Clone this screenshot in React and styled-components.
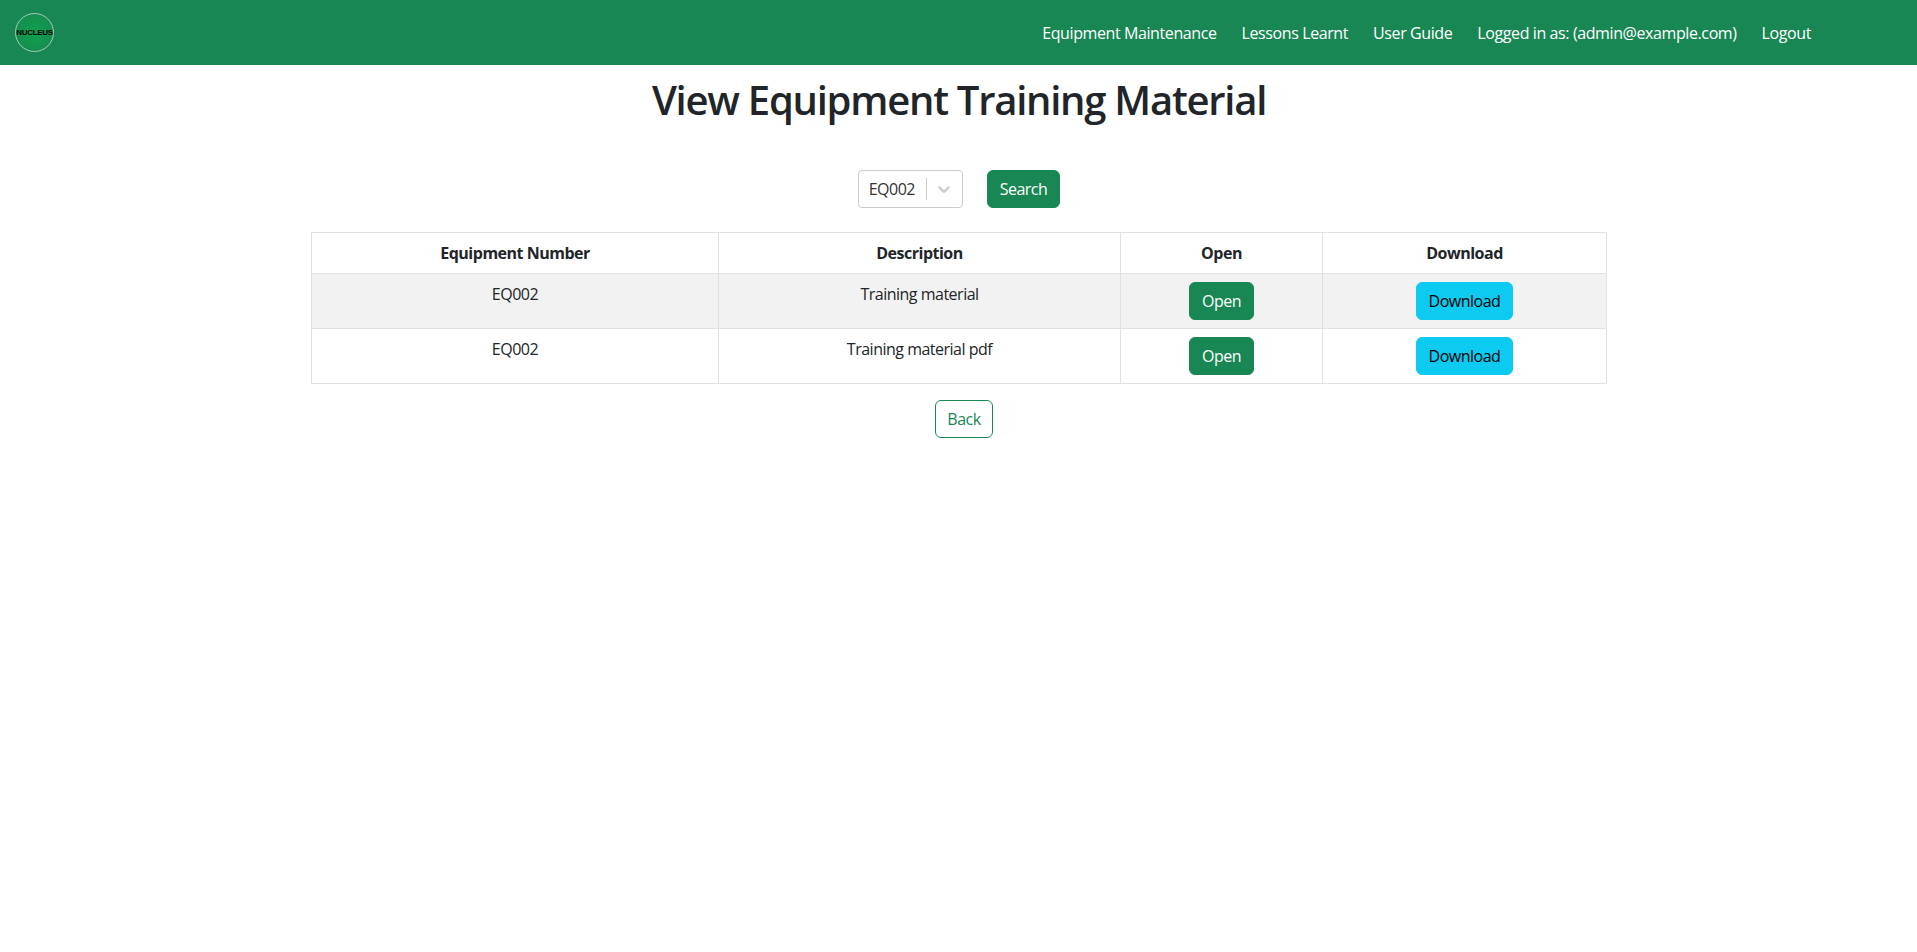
import React from "react";
import styled, { createGlobalStyle } from "styled-components";

const GlobalStyle = createGlobalStyle`
  * {
    box-sizing: border-box;
  }

  body {
    margin: 0;
    background: #fff;
    color: #212529;
    font-family: "Open Sans", "Noto Sans", "Liberation Sans", sans-serif;
    font-size: 16px;
    line-height: 1.5;
    letter-spacing: -0.5px;
  }
`;

const NAV_LINKS = [
  "Equipment Maintenance",
  "Lessons Learnt",
  "User Guide",
  "Logged in as: (admin@example.com)",
  "Logout",
];

const COLUMNS = [
  { title: "Equipment Number", width: 407 },
  { title: "Description", width: 402 },
  { title: "Open", width: 202 },
  { title: "Download", width: 284 },
];

const ROWS = [
  { id: 1, number: "EQ002", description: "Training material" },
  { id: 2, number: "EQ002", description: "Training material pdf" },
];

const App = () => {
  return (
    <>
      <GlobalStyle />
      <Navbar>
        <Logo>
          <LogoText>NUCLEUS</LogoText>
        </Logo>
        <NavLinks>
          {NAV_LINKS.map((link) => (
            <NavLink key={link}>{link}</NavLink>
          ))}
        </NavLinks>
      </Navbar>
      <Main>
        <Title>View Equipment Training Material</Title>
        <SearchRow>
          <Select>
            <SelectValue>EQ002</SelectValue>
            <Separator />
            <Chevron viewBox="0 0 20 20" aria-hidden="true">
              <path d="M4.516 7.548c0.436-0.446 1.043-0.481 1.576 0l3.908 3.747 3.908-3.747c0.533-0.481 1.141-0.446 1.576 0 0.436 0.445 0.408 1.197 0 1.615-0.406 0.418-4.695 4.502-4.695 4.502-0.217 0.223-0.502 0.335-0.787 0.335s-0.57-0.112-0.789-0.335c0 0-4.287-4.084-4.695-4.502s-0.436-1.17 0-1.615z" />
            </Chevron>
          </Select>
          <Button $variant="success">Search</Button>
        </SearchRow>
        <Table>
          <colgroup>
            {COLUMNS.map((col) => (
              <col key={col.title} width={col.width} />
            ))}
          </colgroup>
          <thead>
            <tr>
              {COLUMNS.map((col) => (
                <HeadCell key={col.title}>{col.title}</HeadCell>
              ))}
            </tr>
          </thead>
          <tbody>
            {ROWS.map((row, i) => (
              <Row key={row.id} $striped={i % 2 === 0}>
                <Cell>{row.number}</Cell>
                <Cell>{row.description}</Cell>
                <Cell>
                  <Button $variant="success">Open</Button>
                </Cell>
                <Cell>
                  <Button $variant="info">Download</Button>
                </Cell>
              </Row>
            ))}
          </tbody>
        </Table>
        <BackRow>
          <Button $variant="outline">Back</Button>
        </BackRow>
      </Main>
    </>
  );
};

const Navbar = styled.nav`
  height: 65px;
  background: #198754;
  display: flex;
  align-items: center;
  justify-content: space-between;
  padding: 0 93.5px 0 15px;
`;

const Logo = styled.div`
  width: 39px;
  height: 39px;
  border: 1px solid #9fcdb4;
  border-radius: 50%;
  background: radial-gradient(circle, #0fa34f 0%, #14924f 55%, #198754 100%);
  display: flex;
  align-items: center;
  justify-content: center;
  overflow: hidden;
`;

const LogoText = styled.span`
  color: #000;
  font-family: "Liberation Sans", sans-serif;
  font-size: 8px;
  font-weight: 700;
  letter-spacing: -0.3px;
  line-height: 1;
`;

const NavLinks = styled.div`
  display: flex;
  align-items: center;
`;

const NavLink = styled.a`
  color: #fff;
  padding: 8px;
  margin: 0 4.5px;
  letter-spacing: -0.4px;
  white-space: nowrap;
`;

const Main = styled.main`
  display: flex;
  flex-direction: column;
  align-items: center;
  padding-left: 1px;
`;

const Title = styled.h1`
  margin: 11px 0 0;
  font-size: 40px;
  font-weight: 600;
  letter-spacing: -1.25px;
  line-height: 48px;
`;

const SearchRow = styled.div`
  display: flex;
  gap: 24px;
  margin-top: 46px;
`;

const Select = styled.div`
  width: 105px;
  height: 38px;
  border: 1px solid #ccc;
  border-radius: 4px;
  display: flex;
  align-items: center;
  padding-left: 10px;
`;

const SelectValue = styled.span`
  color: #333;
  width: 57px;
`;

const Separator = styled.span`
  width: 1px;
  height: 22px;
  background: #ccc;
`;

const Chevron = styled.svg`
  width: 20px;
  height: 20px;
  margin-left: 7px;
  fill: #ccc;
`;

const variants = {
  success: "background: #198754; border-color: #198754; color: #fff;",
  info: "background: #0dcaf0; border-color: #0dcaf0; color: #000;",
  outline: "background: #fff; border-color: #198754; color: #198754; padding: 6px 11px;",
};

const Button = styled.button`
  height: 38px;
  padding: 6px 12px;
  border: 1px solid;
  border-radius: 6px;
  font-family: inherit;
  font-size: 16px;
  letter-spacing: inherit;
  line-height: 24px;
  ${(props) => variants[props.$variant]}
`;

const Table = styled.table`
  width: 1295px;
  margin-top: 24px;
  border-collapse: collapse;
  table-layout: fixed;
`;

const HeadCell = styled.th`
  padding: 8px;
  border: 1px solid #dee2e6;
  font-weight: 700;
  text-align: center;
`;

const Row = styled.tr`
  background: ${(props) => (props.$striped ? "#f2f2f2" : "#fff")};
`;

const Cell = styled.td`
  padding: 8px;
  border: 1px solid #dee2e6;
  text-align: center;
  vertical-align: top;
`;

const BackRow = styled.div`
  margin-top: 16px;
  padding-left: 10px;
`;

export default App;
